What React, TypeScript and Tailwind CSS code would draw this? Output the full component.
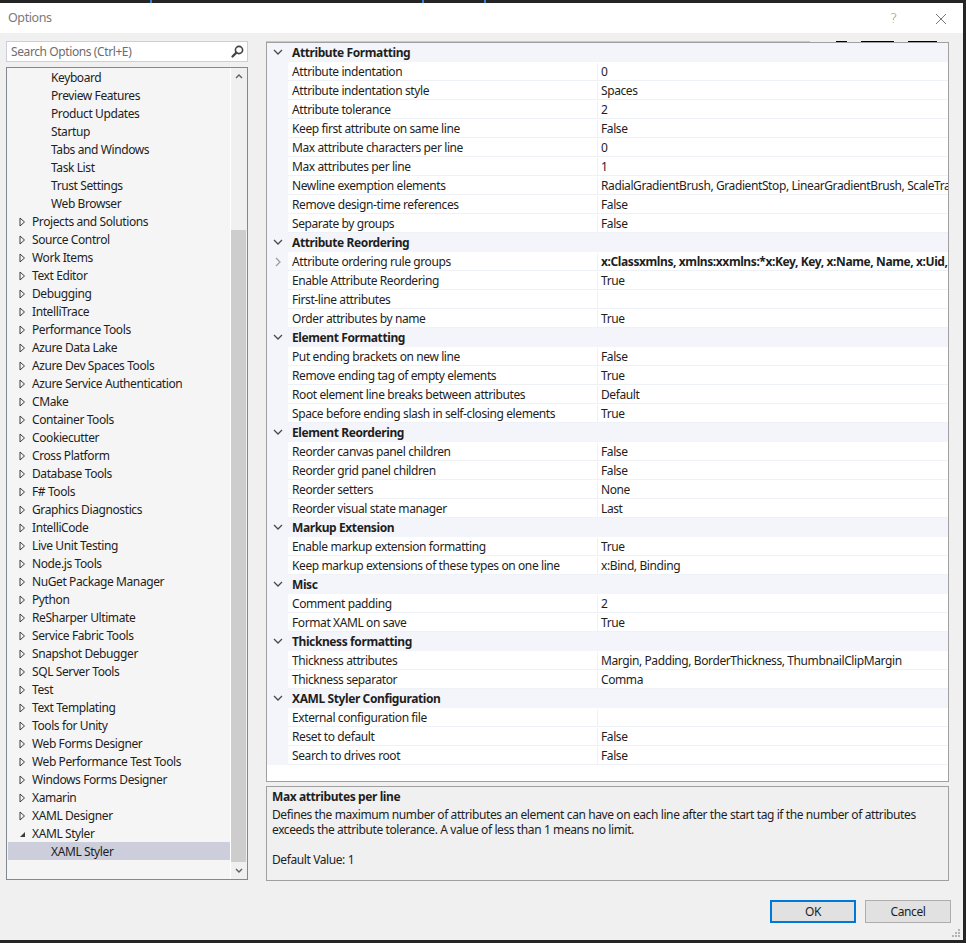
import React from "react";

type TreeItem = {
  label: string;
  level: number;
  state?: "collapsed" | "expanded";
  selected?: boolean;
};

type PropRow =
  | { kind: "cat"; name: string }
  | { kind: "prop"; name: string; value: string; bold?: boolean; sub?: boolean };

const treeItems: TreeItem[] = [
  { label: "Keyboard", level: 1 },
  { label: "Preview Features", level: 1 },
  { label: "Product Updates", level: 1 },
  { label: "Startup", level: 1 },
  { label: "Tabs and Windows", level: 1 },
  { label: "Task List", level: 1 },
  { label: "Trust Settings", level: 1 },
  { label: "Web Browser", level: 1 },
  ...[
    "Projects and Solutions",
    "Source Control",
    "Work Items",
    "Text Editor",
    "Debugging",
    "IntelliTrace",
    "Performance Tools",
    "Azure Data Lake",
    "Azure Dev Spaces Tools",
    "Azure Service Authentication",
    "CMake",
    "Container Tools",
    "Cookiecutter",
    "Cross Platform",
    "Database Tools",
    "F# Tools",
    "Graphics Diagnostics",
    "IntelliCode",
    "Live Unit Testing",
    "Node.js Tools",
    "NuGet Package Manager",
    "Python",
    "ReSharper Ultimate",
    "Service Fabric Tools",
    "Snapshot Debugger",
    "SQL Server Tools",
    "Test",
    "Text Templating",
    "Tools for Unity",
    "Web Forms Designer",
    "Web Performance Test Tools",
    "Windows Forms Designer",
    "Xamarin",
    "XAML Designer",
  ].map((label) => ({ label, level: 0, state: "collapsed" as const })),
  { label: "XAML Styler", level: 0, state: "expanded" },
  { label: "XAML Styler", level: 1, selected: true },
];

const rows: PropRow[] = [
  { kind: "cat", name: "Attribute Formatting" },
  { kind: "prop", name: "Attribute indentation", value: "0" },
  { kind: "prop", name: "Attribute indentation style", value: "Spaces" },
  { kind: "prop", name: "Attribute tolerance", value: "2" },
  { kind: "prop", name: "Keep first attribute on same line", value: "False" },
  { kind: "prop", name: "Max attribute characters per line", value: "0" },
  { kind: "prop", name: "Max attributes per line", value: "1" },
  {
    kind: "prop",
    name: "Newline exemption elements",
    value: "RadialGradientBrush, GradientStop, LinearGradientBrush, ScaleTran",
  },
  { kind: "prop", name: "Remove design-time references", value: "False" },
  { kind: "prop", name: "Separate by groups", value: "False" },
  { kind: "cat", name: "Attribute Reordering" },
  {
    kind: "prop",
    name: "Attribute ordering rule groups",
    value: "x:Classxmlns, xmlns:xxmlns:*x:Key, Key, x:Name, Name, x:Uid,",
    bold: true,
    sub: true,
  },
  { kind: "prop", name: "Enable Attribute Reordering", value: "True" },
  { kind: "prop", name: "First-line attributes", value: "" },
  { kind: "prop", name: "Order attributes by name", value: "True" },
  { kind: "cat", name: "Element Formatting" },
  { kind: "prop", name: "Put ending brackets on new line", value: "False" },
  { kind: "prop", name: "Remove ending tag of empty elements", value: "True" },
  { kind: "prop", name: "Root element line breaks between attributes", value: "Default" },
  { kind: "prop", name: "Space before ending slash in self-closing elements", value: "True" },
  { kind: "cat", name: "Element Reordering" },
  { kind: "prop", name: "Reorder canvas panel children", value: "False" },
  { kind: "prop", name: "Reorder grid panel children", value: "False" },
  { kind: "prop", name: "Reorder setters", value: "None" },
  { kind: "prop", name: "Reorder visual state manager", value: "Last" },
  { kind: "cat", name: "Markup Extension" },
  { kind: "prop", name: "Enable markup extension formatting", value: "True" },
  {
    kind: "prop",
    name: "Keep markup extensions of these types on one line",
    value: "x:Bind, Binding",
  },
  { kind: "cat", name: "Misc" },
  { kind: "prop", name: "Comment padding", value: "2" },
  { kind: "prop", name: "Format XAML on save", value: "True" },
  { kind: "cat", name: "Thickness formatting" },
  {
    kind: "prop",
    name: "Thickness attributes",
    value: "Margin, Padding, BorderThickness, ThumbnailClipMargin",
  },
  { kind: "prop", name: "Thickness separator", value: "Comma" },
  { kind: "cat", name: "XAML Styler Configuration" },
  { kind: "prop", name: "External configuration file", value: "" },
  { kind: "prop", name: "Reset to default", value: "False" },
  { kind: "prop", name: "Search to drives root", value: "False" },
];

const TreeRow = ({ item }: { item: TreeItem }) => (
  <div
    className={`flex h-[18px] items-center whitespace-nowrap pt-[1px] ${
      item.selected ? "bg-[#cccedb]" : ""
    } ${item.level === 1 ? "pl-[25px]" : "pl-[6px]"}`}
  >
    <div className="flex w-[18px] shrink-0 items-center pl-[5px]">
      {item.state === "collapsed" && (
        <svg width="7" height="10" viewBox="0 0 7 10">
          <path d="M1 1 L5.5 5 L1 9 Z" fill="none" stroke="#3c3c3c" strokeWidth="1" />
        </svg>
      )}
      {item.state === "expanded" && (
        <svg width="7" height="10" viewBox="0 0 7 10">
          <path d="M6 3 L6 8 L1 8 Z" fill="#3c3c3c" />
        </svg>
      )}
    </div>
    <span className="text-[#1e1e1e]">{item.label}</span>
  </div>
);

const GridRow = ({ row }: { row: PropRow }) => {
  if (row.kind === "cat") {
    return (
      <div className="flex h-[19px] items-center border-b border-[#f3f5fa] bg-[#f3f5fa]">
        <div className="flex w-[21px] shrink-0 justify-center pl-[1px]">
          <svg width="10" height="6" viewBox="0 0 10 6">
            <polyline points="1,1 5,5 9,1" fill="none" stroke="#4a4a4a" strokeWidth="1.3" />
          </svg>
        </div>
        <span className="pl-[4px] pt-[1px] font-bold text-[#1e1e1e]">{row.name}</span>
      </div>
    );
  }
  return (
    <div className="flex h-[19px]">
      <div className="flex w-[21px] shrink-0 items-center justify-center bg-[#f3f5fa]">
        {row.sub && (
          <svg width="6" height="10" viewBox="0 0 6 10">
            <polyline points="1,1 5,5 1,9" fill="none" stroke="#9a9a9a" strokeWidth="1.2" />
          </svg>
        )}
      </div>
      <div className="flex flex-1 border-b border-[#eef1f6] bg-white pt-[1px]">
        <div className="flex w-[310px] shrink-0 items-center overflow-hidden whitespace-nowrap border-r border-[#eef1f6] pl-[4px] text-[#1e1e1e]">
          {row.name}
        </div>
        <div
          className={`flex min-w-0 flex-1 items-center overflow-hidden whitespace-nowrap pl-[3px] text-[#1e1e1e] ${
            row.bold ? "font-bold" : ""
          }`}
        >
          {row.value}
        </div>
      </div>
    </div>
  );
};

export default function App() {
  return (
    <div className="flex h-[943px] w-[966px] flex-col bg-[#252526] font-['Segoe_UI','Noto_Sans',sans-serif] text-[12px] tracking-[-0.4px]">
      <div className="flex h-[3px] shrink-0">
        <div className="ml-[150px] w-[2px] bg-[#3d7fd0]" />
        <div className="ml-[270px] w-[2px] bg-[#3d7fd0]" />
        <div className="ml-[60px] w-[2px] bg-[#3d7fd0]" />
      </div>
      <div className="flex h-[937px] w-[963px] flex-col bg-[#f0f0f0]">
        {/* title bar */}
        <div className="flex h-[30px] shrink-0 items-center bg-white pl-[8px] pr-[16px] pt-[1px]">
          <span className="flex-1 text-[12.5px] text-[#7a7a7a]">Options</span>
          <span className="mr-[38px] font-['DejaVu_Sans',sans-serif] text-[14px] font-light text-[#8a8a8a]">
            ?
          </span>
          <svg width="12" height="12" viewBox="0 0 12 12">
            <path d="M1 1 L11 11 M11 1 L1 11" stroke="#777" strokeWidth="1" />
          </svg>
        </div>

        {/* body */}
        <div className="flex shrink-0 pl-[6px] pt-[8px]">
          {/* left */}
          <div className="flex w-[242px] shrink-0 flex-col">
            <div className="flex h-[21px] items-center border border-[#cccedb] bg-white pl-[4px] pr-[3px]">
              <span className="flex-1 text-[#6d6d6d]">Search Options (Ctrl+E)</span>
              <svg width="13" height="13" viewBox="0 0 13 13">
                <circle cx="8" cy="5" r="3.6" fill="none" stroke="#424242" strokeWidth="1.6" />
                <path d="M5.4 7.6 L1.5 11.5" stroke="#424242" strokeWidth="2.2" strokeLinecap="round" />
              </svg>
            </div>
            <div className="mt-[5px] flex h-[813px] border border-[#828790] bg-[#f5f5f5]">
              <div className="flex-1 overflow-hidden pl-[1px]">
                {treeItems.map((item, i) => (
                  <TreeRow key={i} item={item} />
                ))}
              </div>
              <div className="flex w-[17px] shrink-0 flex-col border-l border-white bg-[#f0f0f0]">
                <div className="flex h-[17px] items-center justify-center">
                  <svg width="8" height="5" viewBox="0 0 8 5">
                    <polyline points="1,4 4,1 7,4" fill="none" stroke="#606060" strokeWidth="1.4" />
                  </svg>
                </div>
                <div className="flex flex-1 flex-col pt-[145px]">
                  <div className="w-[15px] flex-1 bg-[#cdcdcd]" />
                </div>
                <div className="flex h-[17px] items-center justify-center">
                  <svg width="8" height="5" viewBox="0 0 8 5">
                    <polyline points="1,1 4,4 7,1" fill="none" stroke="#606060" strokeWidth="1.4" />
                  </svg>
                </div>
              </div>
            </div>
          </div>

          {/* right */}
          <div className="ml-[18px] flex w-[683px] shrink-0 flex-col">
            <div className="flex h-[1px] shrink-0">
              <div className="w-[544px] bg-[#c8c8c8]" />
              <div className="ml-[26px] w-[11px] bg-black" />
              <div className="ml-[14px] w-[33px] bg-black" />
              <div className="ml-[14px] w-[29px] bg-black" />
            </div>
            <div className="flex h-[740px] flex-col overflow-hidden border border-[#a0a0a0] bg-white">
              {rows.map((row, i) => (
                <GridRow key={i} row={row} />
              ))}
            </div>
            <div className="mt-[4px] flex h-[95px] flex-col border border-[#a0a0a0] bg-[#f0f0f0] px-[5px] pt-[2px] leading-[15px] text-[#1e1e1e]">
              <div className="mb-[3px] font-bold">Max attributes per line</div>
              <div>
                Defines the maximum number of attributes an element can have on each line after the start tag if the
                number of attributes exceeds the attribute tolerance. A value of less than 1 means no limit.
              </div>
              <div className="h-[15px]" />
              <div>Default Value: 1</div>
            </div>
          </div>
        </div>

        {/* footer */}
        <div className="flex flex-1 flex-col pr-[12px]">
          <div className="mt-[19px] flex justify-end gap-[9px]">
            <button className="h-[23px] w-[86px] border-2 border-[#0078d7] bg-[#e1e1e1] text-[#1e1e1e]">OK</button>
            <button className="h-[23px] w-[86px] border border-[#adadad] bg-[#e1e1e1] text-[#1e1e1e]">Cancel</button>
          </div>
          <div className="mb-[3px] mt-auto flex justify-end">
            <svg width="8" height="8" viewBox="0 0 8 8" className="mr-[-9px]">
              <rect x="6" y="0" width="2" height="2" fill="#b4b4b4" />
              <rect x="3" y="3" width="2" height="2" fill="#b4b4b4" />
              <rect x="6" y="3" width="2" height="2" fill="#b4b4b4" />
              <rect x="0" y="6" width="2" height="2" fill="#b4b4b4" />
              <rect x="3" y="6" width="2" height="2" fill="#b4b4b4" />
              <rect x="6" y="6" width="2" height="2" fill="#b4b4b4" />
            </svg>
          </div>
        </div>
      </div>
    </div>
  );
}
